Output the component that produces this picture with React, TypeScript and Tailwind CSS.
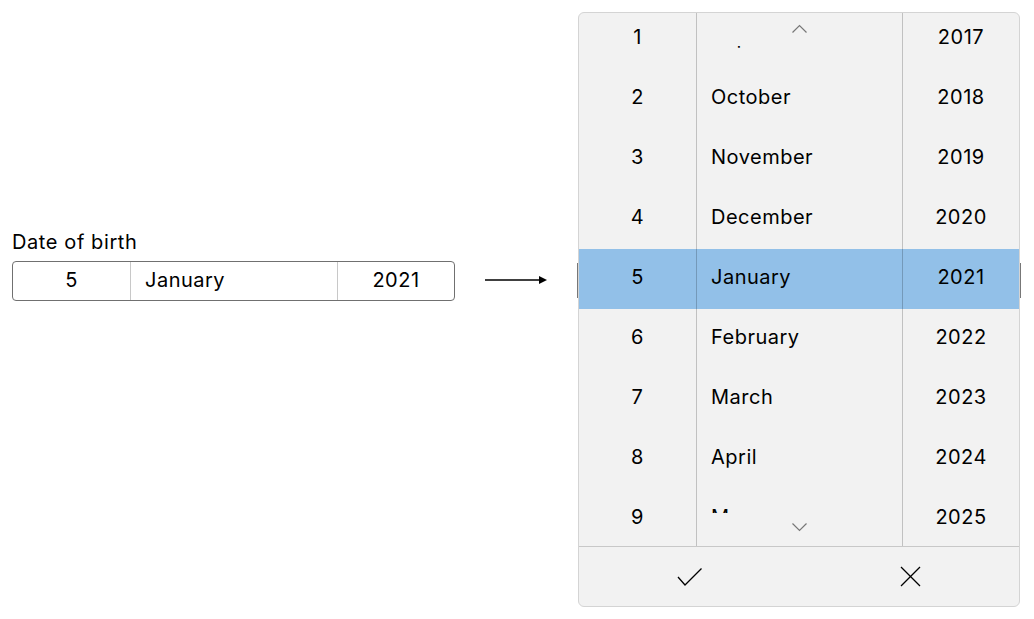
import React from "react";

const days = [1, 2, 3, 4, 5, 6, 7, 8, 9];
const months = ["September", "October", "November", "December", "January", "February", "March", "April", "May"];
const years = [2017, 2018, 2019, 2020, 2021, 2022, 2023, 2024, 2025];

export default function App() {
  return (
    <div
      className="w-[1034px] h-[619px] bg-white flex items-start text-black"
      style={{ fontFamily: "Inter, 'Noto Sans', sans-serif" }}
    >
      {/* left: field */}
      <div className="ml-3 mt-[230px] w-[443px] flex flex-col">
        <div className="text-[20px] tracking-[0.6px] leading-[24px] h-[31px]">Date of birth</div>
        <div className="h-[40px] flex border border-[#707070] rounded-[4px] text-[20px] tracking-[0.5px]">
          <div className="w-[118px] pb-[2px] flex items-center justify-center border-r border-[#c8c8c8]">5</div>
          <div className="w-[207px] pb-[2px] flex items-center pl-[14px] border-r border-[#c8c8c8]">January</div>
          <div className="flex-1 pb-[2px] flex items-center justify-center">2021</div>
        </div>
      </div>

      {/* arrow */}
      <div className="ml-[30px] mt-[275px] w-[62px] h-[10px] flex items-center">
        <svg width="62" height="10" viewBox="0 0 62 10">
          <line x1="0" y1="5" x2="56" y2="5" stroke="#000" strokeWidth="1.6" />
          <polygon points="54,1 62,5 54,9" fill="#000" />
        </svg>
      </div>

      {/* picker */}
      <div className="ml-[31px] mt-3 w-[442px] h-[595px] relative flex flex-col bg-[#f2f2f2] border border-[#d4d4d4] rounded-[6px]">
        <div className="absolute left-[-2px] top-[250px] w-[1px] h-[35px] bg-[#777]" />
        <div className="absolute right-[-2px] top-[250px] w-[1px] h-[35px] bg-[#777]" />

        <div className="relative h-[533px] overflow-hidden flex text-[20px] tracking-[0.5px]">
          <div className="absolute left-0 right-0 top-[236px] h-[60px] bg-[#92c0e8]" />

          {/* days */}
          <div className="relative w-[117px] h-full overflow-hidden">
            <div className="mt-[-4px] flex flex-col">
              {days.map((d) => (
                <div key={d} className="h-[60px] pb-[4px] flex items-center justify-center">{d}</div>
              ))}
            </div>
          </div>

          {/* months */}
          <div className="relative w-[206px] h-full border-l border-[rgba(0,0,0,0.2)]">
            <div className="mt-[33px] h-[467px] overflow-hidden">
              <div className="mt-[-37px] flex flex-col">
                {months.map((m) => (
                  <div key={m} className="h-[60px] pb-[4px] flex items-center pl-[14px]">{m}</div>
                ))}
              </div>
            </div>
            <svg className="absolute left-[94px] top-[11px]" width="17" height="10" viewBox="0 0 17 10">
              <polyline points="1.5,8.5 8.5,1.5 15.5,8.5" fill="none" stroke="#777" strokeWidth="1.2" />
            </svg>
            <svg className="absolute left-[94px] top-[509px]" width="17" height="10" viewBox="0 0 17 10">
              <polyline points="1.5,1.5 8.5,8.5 15.5,1.5" fill="none" stroke="#777" strokeWidth="1.2" />
            </svg>
          </div>

          {/* years */}
          <div className="relative flex-1 h-full overflow-hidden border-l border-[rgba(0,0,0,0.2)]">
            <div className="mt-[-4px] flex flex-col">
              {years.map((y) => (
                <div key={y} className="h-[60px] pb-[4px] flex items-center justify-center">{y}</div>
              ))}
            </div>
          </div>
        </div>

        {/* footer */}
        <div className="flex-1 border-t border-[#c8c8c8] flex">
          <div className="w-[222px] flex items-center justify-center">
            <svg width="26" height="20" viewBox="0 0 26 20">
              <polyline points="1,10 8,18 24.5,1.5" fill="none" stroke="#000" strokeWidth="1.3" />
            </svg>
          </div>
          <div className="flex-1 flex items-center justify-center">
            <svg width="21" height="21" viewBox="0 0 21 21">
              <line x1="1" y1="1" x2="20" y2="20" stroke="#000" strokeWidth="1.3" />
              <line x1="20" y1="1" x2="1" y2="20" stroke="#000" strokeWidth="1.3" />
            </svg>
          </div>
        </div>
      </div>
    </div>
  );
}
